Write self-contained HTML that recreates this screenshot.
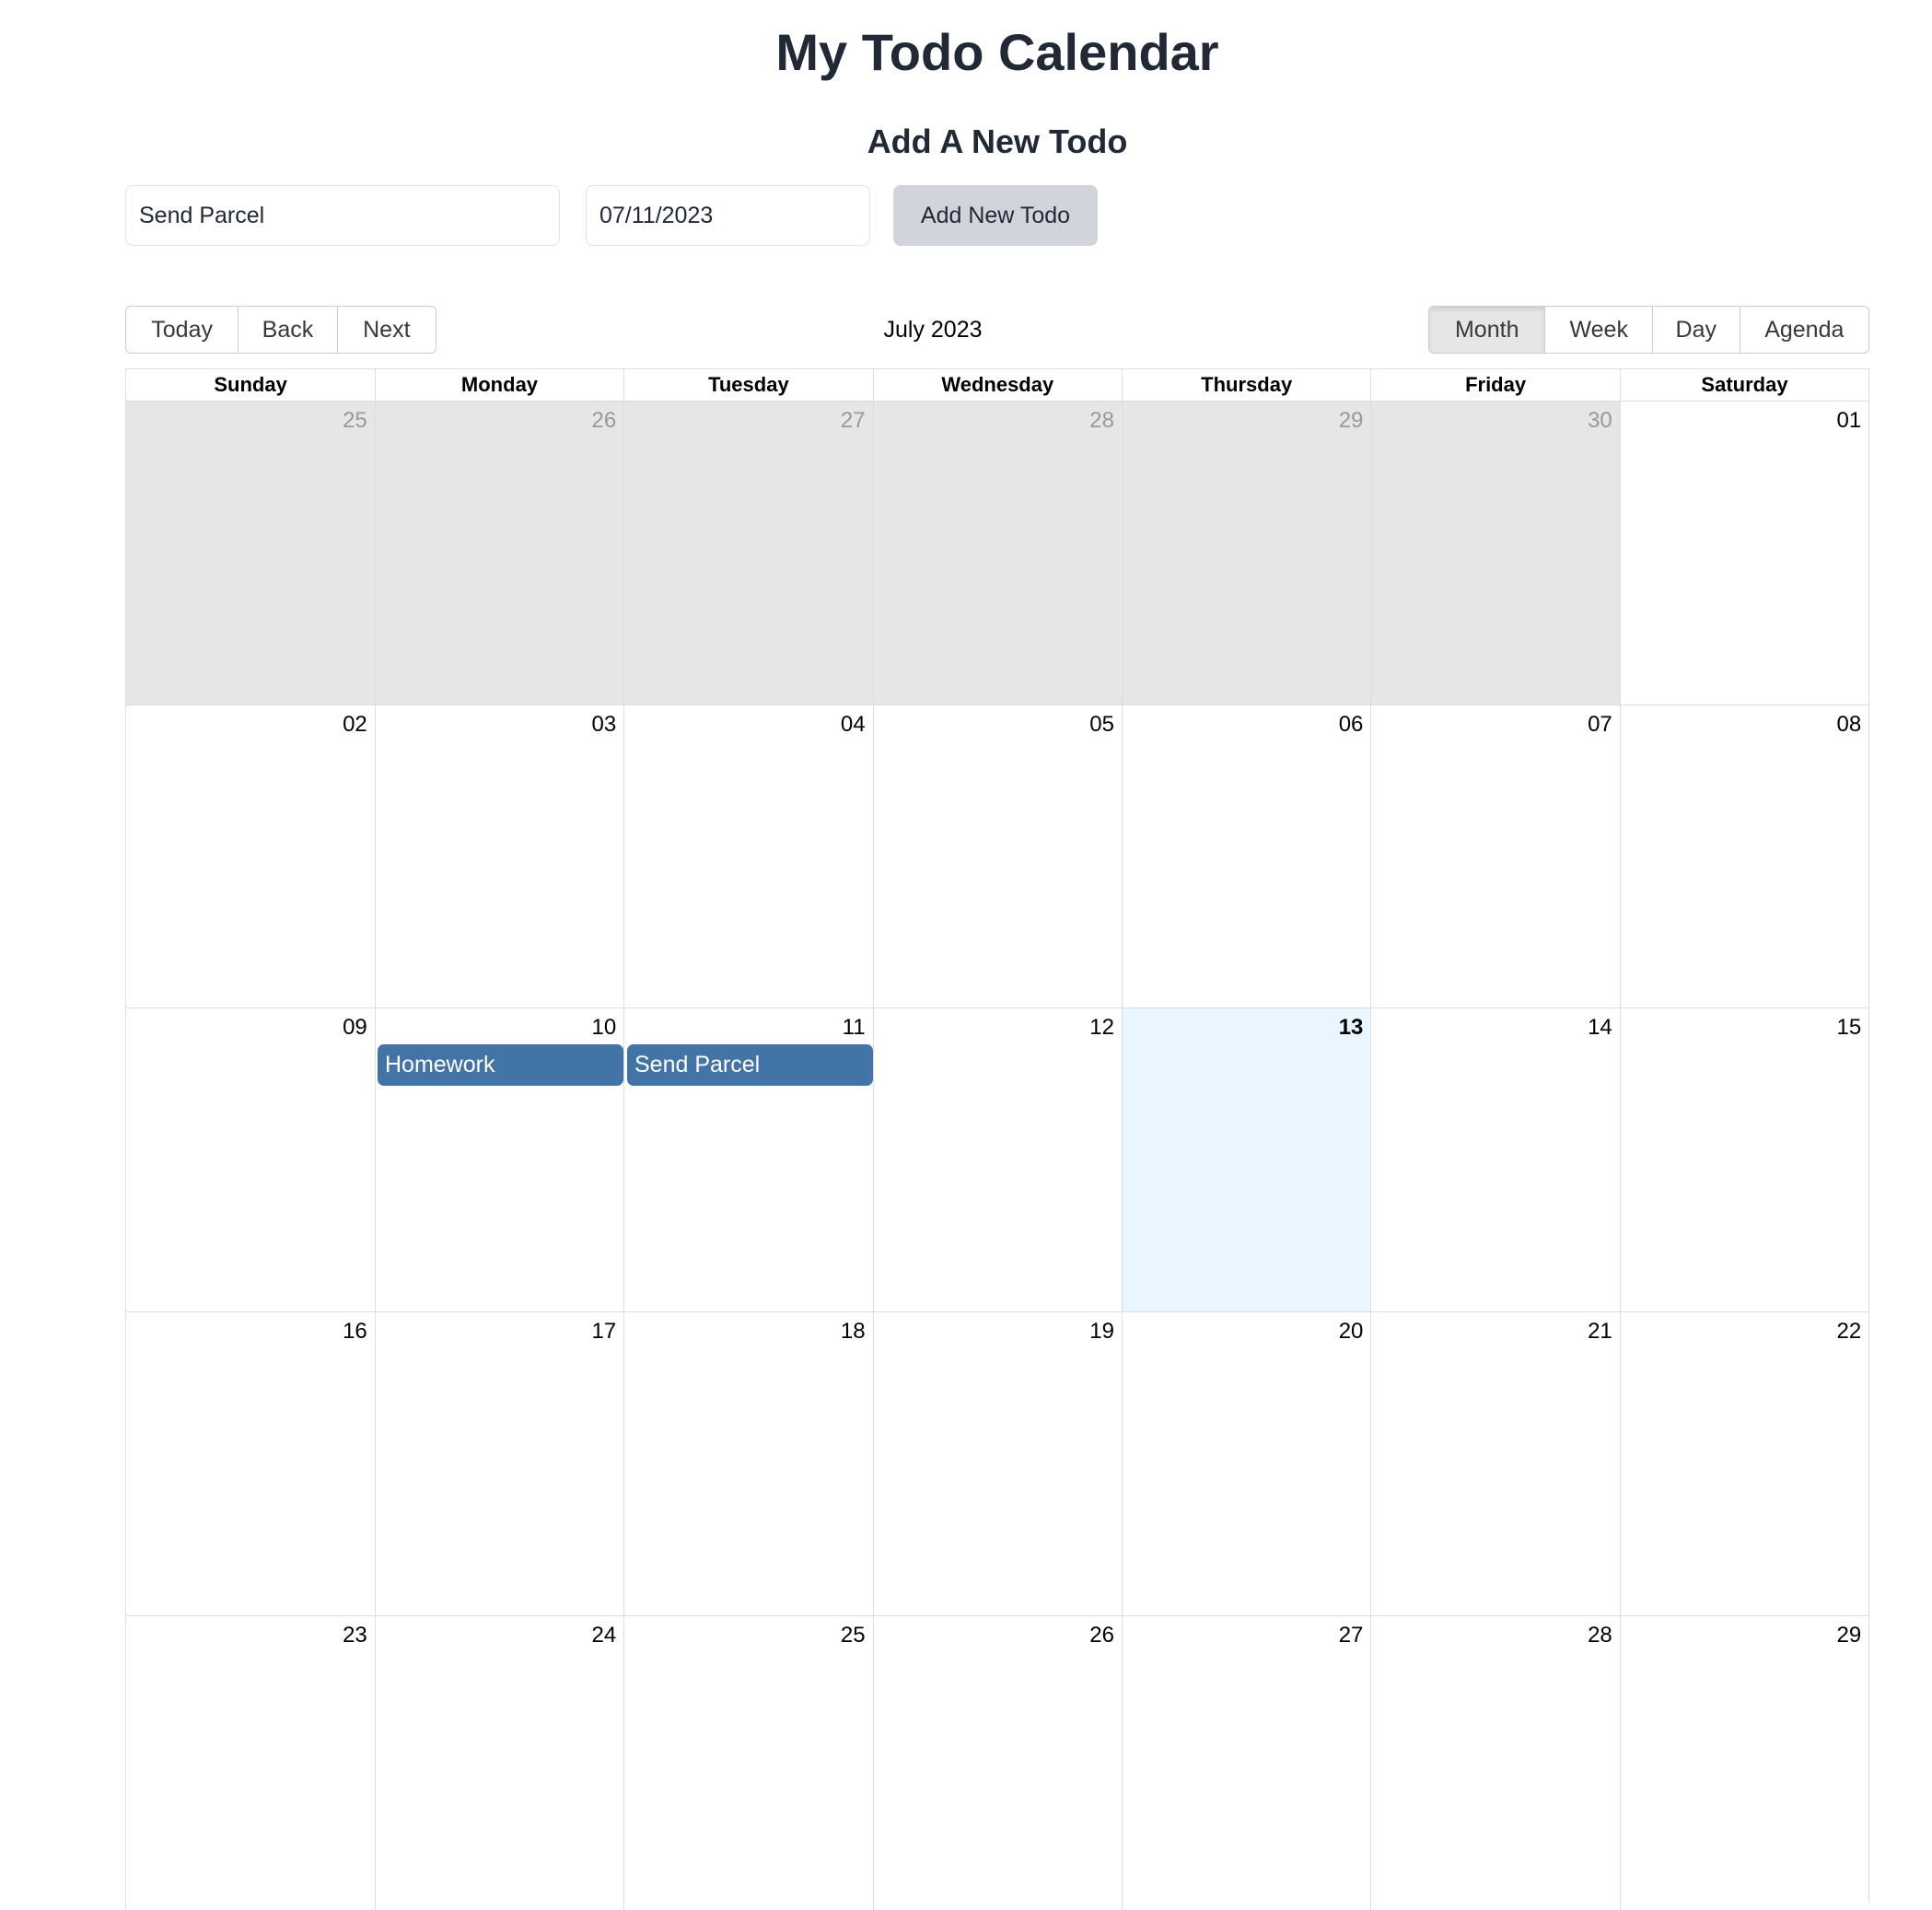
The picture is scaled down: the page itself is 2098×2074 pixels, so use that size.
<!DOCTYPE html>
<html><head><meta charset="utf-8"><style>
*{box-sizing:border-box;margin:0;padding:0}
body{width:2098px;height:2066px;overflow:hidden;background:#fff;font-family:"Liberation Sans",sans-serif;position:relative;color:#000}
.a{position:absolute}
h1{position:absolute;left:0;width:2166px;text-align:center;top:22px;font-size:56px;line-height:70px;color:#212936;font-weight:bold}
h2{position:absolute;left:0;width:2166px;text-align:center;top:126px;font-size:36px;line-height:56px;color:#212936;font-weight:bold}
.inp{position:absolute;top:201px;height:66px;border:1px solid #e2e2e2;border-radius:8px;font-size:25px;line-height:64px;padding-left:14px;color:#212936}
.btn{position:absolute;top:201px;height:66px;left:970px;width:222px;background:#d1d5db;border-radius:8px;font-size:25px;line-height:66px;text-align:center;color:#212936}
.grp{position:absolute;top:332px;height:52px;border:1px solid #ccc;border-radius:6px;display:flex;overflow:hidden}
.grp div{border-left:1px solid #ccc;font-size:25px;line-height:50px;text-align:center;color:#373a3c}
.grp div:first-child{border-left:none}
.hd{position:absolute;top:400px;height:35px;font-size:22px;font-weight:bold;text-align:center;line-height:34px;border-left:1px solid #ddd;border-top:1px solid #ddd}
.cell{position:absolute;border-left:1px solid #ddd;border-top:1px solid #ddd;font-size:24px;text-align:right;padding:6px 8px 0 0;line-height:30px}
.ev{position:absolute;height:45px;background:#4374a7;color:#fff;border-radius:7px;font-size:25px;line-height:45px;padding-left:8px}
</style></head><body>
<h1>My Todo Calendar</h1>
<h2>Add A New Todo</h2>
<div class="inp" style="left:136px;width:472px">Send Parcel</div>
<div class="inp" style="left:636px;width:309px">07/11/2023</div>
<div class="btn">Add New Todo</div>
<div class="grp" style="left:136px;width:338px"><div style="width:122px">Today</div><div style="width:108px">Back</div><div style="width:108px">Next</div></div>
<div class="a" style="left:868px;width:290px;top:332px;line-height:52px;font-size:25px;text-align:center">July 2023</div>
<div class="grp" style="left:1551px;width:479px"><div style="width:126px;background:#e6e6e6;box-shadow:inset 0 3px 5px rgba(0,0,0,.1)">Month</div><div style="width:117px">Week</div><div style="width:95px">Day</div><div style="width:141px">Agenda</div></div>
<div id="cal"></div>
<div class="a" style="left:2029px;top:400px;width:1px;height:1666px;background:#ddd"></div>
<script>
var days=["Sunday","Monday","Tuesday","Wednesday","Thursday","Friday","Saturday"];
var h="",cw=270.4,L=136.4;
for(var i=0;i<7;i++){h+='<div class="hd" style="left:'+(L+i*cw)+'px;width:'+cw+'px">'+days[i]+'</div>';}
var nums=[["25","26","27","28","29","30","01"],["02","03","04","05","06","07","08"],["09","10","11","12","13","14","15"],["16","17","18","19","20","21","22"],["23","24","25","26","27","28","29"]];
for(var r=0;r<5;r++)for(var c=0;c<7;c++){
 var bg="#fff",col="#000",fw="normal";
 if(r==0&&c<6){bg="#e6e6e6";col="#999";}
 if(r==2&&c==4){bg="#eaf6ff";fw="bold";}
 h+='<div class="cell" style="left:'+(L+c*cw)+'px;top:'+(435+r*329.7)+'px;width:'+cw+'px;height:'+(r==4?320:329.7)+'px;background:'+bg+';color:'+col+';font-weight:'+fw+'">'+nums[r][c]+'</div>';
}
h+='<div class="ev" style="left:410px;top:1134px;width:267px">Homework</div>';
h+='<div class="ev" style="left:681px;top:1134px;width:267px">Send Parcel</div>';
document.getElementById("cal").innerHTML=h;
</script>
</body></html>
